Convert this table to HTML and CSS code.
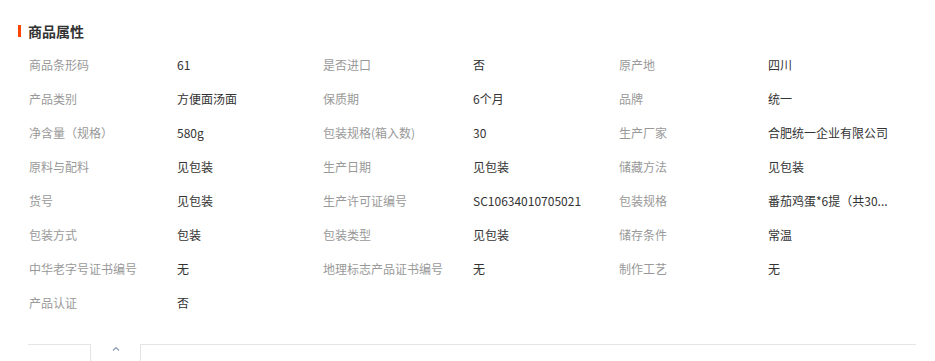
FILE: index.html
```html
<!DOCTYPE html>
<html lang="zh-CN">
<head>
<meta charset="utf-8">
<title>商品属性</title>
<link rel="stylesheet" href="styles.css">
</head>
<body>
<section class="attrs">
  <h2 class="attrs-title"><span class="bar"></span>商品属性</h2>
  <div class="grid">
    <div class="lab">商品条形码</div><div class="val">61</div>
    <div class="lab">是否进口</div><div class="val">否</div>
    <div class="lab">原产地</div><div class="val">四川</div>

    <div class="lab">产品类别</div><div class="val">方便面汤面</div>
    <div class="lab">保质期</div><div class="val">6个月</div>
    <div class="lab">品牌</div><div class="val">统一</div>

    <div class="lab">净含量（规格）</div><div class="val">580g</div>
    <div class="lab">包装规格(箱入数)</div><div class="val">30</div>
    <div class="lab">生产厂家</div><div class="val">合肥统一企业有限公司</div>

    <div class="lab">原料与配料</div><div class="val">见包装</div>
    <div class="lab">生产日期</div><div class="val">见包装</div>
    <div class="lab">储藏方法</div><div class="val">见包装</div>

    <div class="lab">货号</div><div class="val">见包装</div>
    <div class="lab">生产许可证编号</div><div class="val">SC10634010705021</div>
    <div class="lab">包装规格</div><div class="val">番茄鸡蛋*6提（共30...</div>

    <div class="lab">包装方式</div><div class="val">包装</div>
    <div class="lab">包装类型</div><div class="val">见包装</div>
    <div class="lab">储存条件</div><div class="val">常温</div>

    <div class="lab">中华老字号证书编号</div><div class="val">无</div>
    <div class="lab">地理标志产品证书编号</div><div class="val">无</div>
    <div class="lab">制作工艺</div><div class="val">无</div>

    <div class="lab">产品认证</div><div class="val">否</div>
  </div>
  <div class="fold">
    <div class="fold-line fold-left"></div>
    <div class="fold-tab">
      <svg width="8" height="5" viewBox="0 0 8 5"><polyline points="1,4.5 4,1.5 7,4.5" fill="none" stroke="#8a9ab0" stroke-width="1.2"/></svg>
    </div>
    <div class="fold-line fold-right"></div>
  </div>
</section>
</body>
</html>
```

FILE: styles.css
```css
html, body {
  margin: 0;
  padding: 0;
  background: #fff;
}
body {
  font-family: "Microsoft YaHei", "Noto Sans CJK SC", "Noto Sans", sans-serif;
  font-size: 12px;
  color: #333;
  overflow: hidden;
}
.attrs {
  padding: 20px 0 0 18px;
  width: 898px;
}
.attrs-title {
  margin: 0 0 5px 0;
  height: 22px;
  line-height: 22px;
  font-size: 14px;
  font-weight: bold;
  color: #333;
  display: flex;
  align-items: center;
  gap: 7px;
}
.bar {
  display: block;
  width: 3px;
  height: 12px;
  background: #ff4400;
}
.grid {
  display: grid;
  grid-template-columns: 148px 146px 150px 146px 149px 149px;
  grid-auto-rows: 34px;
  margin-left: 11px;
  align-items: center;
}
.lab {
  color: #999;
  white-space: nowrap;
}
.val {
  color: #333;
  white-space: nowrap;
}
.fold {
  display: flex;
  margin: 25px 0 0 10px;
  height: 20px;
}
.fold-line {
  border-top: 1px solid #e5e5e5;
}
.fold-left {
  width: 62px;
}
.fold-right {
  flex: 1;
}
.fold-tab {
  width: 51px;
  height: 19px;
  border: 1px solid #e5e5e5;
  border-top: none;
  border-radius: 0 0 4px 4px;
  display: flex;
  justify-content: center;
  padding-top: 2px;
  box-sizing: border-box;
}
.fold-tab svg {
  display: block;
}
```
